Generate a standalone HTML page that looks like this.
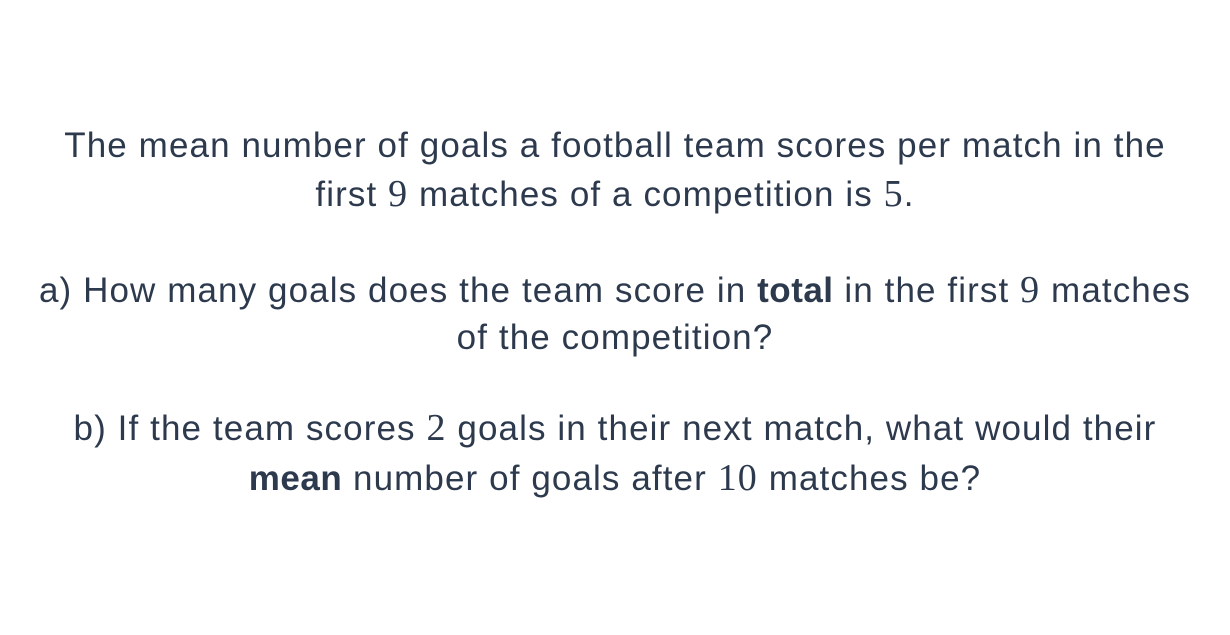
<!DOCTYPE html>
<html><head><meta charset="utf-8"><style>
html,body{margin:0;padding:0;background:#fff;}
body{width:1230px;height:635px;position:relative;overflow:hidden;font-family:"Liberation Sans",sans-serif;color:#2d3a4e;}
.l{position:absolute;left:0;width:1230px;text-align:center;font-size:35px;line-height:48px;white-space:nowrap;letter-spacing:1.1px;}
.m{font-family:"Liberation Serif",serif;font-size:38px;}
b{font-weight:bold;letter-spacing:0.5px;}
</style></head><body>
<div class="l" style="top:122px">The mean number of goals a football team scores per match in the</div>
<div class="l" style="top:170px">first <span class="m">9</span> matches of a competition is <span class="m">5</span>.</div>
<div class="l" style="top:266px">a) How many goals does the team score in <b>total</b> in the first <span class="m">9</span> matches</div>
<div class="l" style="top:314px">of the competition?</div>
<div class="l" style="top:404px">b) If the team scores <span class="m">2</span> goals in their next match, what would their</div>
<div class="l" style="top:454px"><b>mean</b> number of goals after <span class="m">10</span> matches be?</div>
</body></html>
